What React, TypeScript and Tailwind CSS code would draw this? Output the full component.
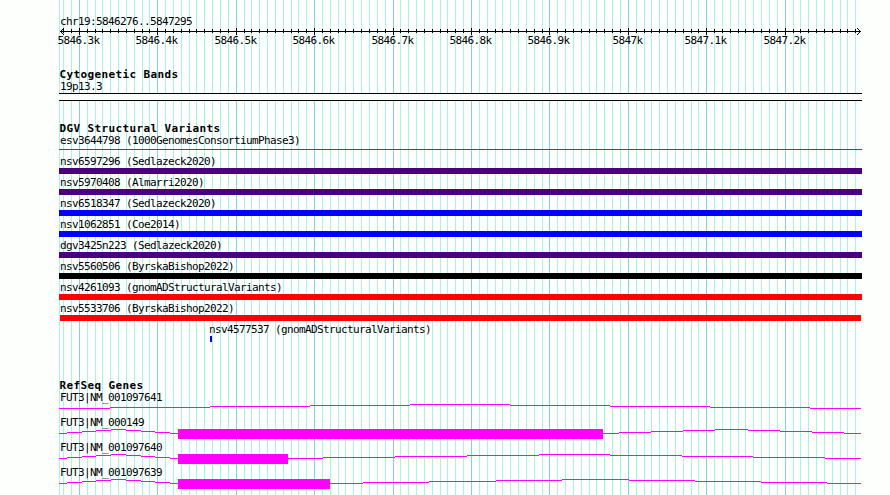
const REGION_START = 5846276;
const PX_PER_BASE = 800 / 1020;

const positionOf = (base: number) => Math.round(60 + (base - REGION_START) * PX_PER_BASE);

const minorTicks = Array.from({ length: 102 }, (_, i) => 5846280 + i * 10);
const isMajor = (base: number) => base % 100 === 0;

const axisLabels = [
  '5846.3k', '5846.4k', '5846.5k', '5846.6k', '5846.7k',
  '5846.8k', '5846.9k', '5847k', '5847.1k', '5847.2k',
];

type Variant = { name: string; color: string; box: string };

const variants: Variant[] = [
  { name: 'nsv6597296 (Sedlazeck2020)', color: 'bg-[#4b0082]', box: 'ml-[59px] w-[803px]' },
  { name: 'nsv5970408 (Almarri2020)', color: 'bg-[#4b0082]', box: 'ml-[59px] w-[803px]' },
  { name: 'nsv6518347 (Sedlazeck2020)', color: 'bg-[#0000ff]', box: 'ml-[59px] w-[803px]' },
  { name: 'nsv1062851 (Coe2014)', color: 'bg-[#0000ff]', box: 'ml-[59px] w-[803px]' },
  { name: 'dgv3425n223 (Sedlazeck2020)', color: 'bg-[#4b0082]', box: 'ml-[59px] w-[803px]' },
  { name: 'nsv5560506 (ByrskaBishop2022)', color: 'bg-black', box: 'ml-[59px] w-[803px]' },
  { name: 'nsv4261093 (gnomADStructuralVariants)', color: 'bg-[#ff0000]', box: 'ml-[59px] w-[803px]' },
  { name: 'nsv5533706 (ByrskaBishop2022)', color: 'bg-[#ff0000]', box: 'ml-[60px] w-[801px]' },
];

// Each intron is a stepped arch: ten x breaks, rising four pixels to the middle segment.
type Gene = { name: string; exon?: [number, number]; introns: number[][] };

const leadingIntron = [59, 67, 82, 96, 111, 126, 141, 155, 170, 178];

const genes: Gene[] = [
  { name: 'FUT3|NM_001097641', introns: [[59, 110, 210, 310, 410, 510, 610, 710, 810, 861]] },
  {
    name: 'FUT3|NM_000149',
    exon: [178, 603],
    introns: [leadingIntron, [603, 619, 651, 683, 715, 748, 780, 812, 844, 861]],
  },
  {
    name: 'FUT3|NM_001097640',
    exon: [178, 288],
    introns: [leadingIntron, [288, 323, 395, 467, 539, 610, 682, 753, 825, 861]],
  },
  {
    name: 'FUT3|NM_001097639',
    exon: [178, 330],
    introns: [leadingIntron, [330, 363, 429, 496, 562, 629, 695, 761, 827, 861]],
  },
];

function GridLines() {
  return (
    <svg className="absolute inset-0" width="890" height="495" shapeRendering="crispEdges">
      <rect x={59} y={0} width={1} height={495} fill="#afeeee" />
      {minorTicks.map((b) => (
        <rect key={b} x={positionOf(b)} y={0} width={1} height={495} fill={isMajor(b) ? '#87ceeb' : '#afeeee'} />
      ))}
    </svg>
  );
}

function Ruler() {
  return (
    <svg className="block" width="890" height="7" shapeRendering="crispEdges">
      <rect x={60} y={3} width={801} height={1} />
      {minorTicks.map((b) => (
        <rect key={b} x={positionOf(b)} y={isMajor(b) ? 0 : 1} width={1} height={isMajor(b) ? 7 : 4} />
      ))}
      {[1, 2, 3].map((d) => (
        <g key={d}>
          <rect x={60 + d} y={3 - d} width={1} height={1} />
          <rect x={60 + d} y={3 + d} width={1} height={1} />
          <rect x={860 - d} y={3 - d} width={1} height={1} />
          <rect x={860 - d} y={3 + d} width={1} height={1} />
        </g>
      ))}
    </svg>
  );
}

function Heading({ text }: { text: string }) {
  return <h2 className="ml-[59.5px] h-[14px] text-[11px] leading-[21px] font-bold tracking-[0.38px]">{text}</h2>;
}

function Label({ text, indent = 'ml-[60px]' }: { text: string; indent?: string }) {
  return <div className={`${indent} h-[15px] leading-[17px]`}>{text}</div>;
}

function GeneRow({ gene }: { gene: Gene }) {
  return (
    <div className="h-[25px]">
      <Label text={gene.name} />
      <svg className="block" width="890" height="10" fill="#ff00ff" shapeRendering="crispEdges">
        {gene.introns.map((xs) =>
          xs.slice(0, -1).map((x, i) => (
            <rect key={x} x={x} y={Math.abs(i - 4)} width={xs[i + 1] - x} height={1} />
          )),
        )}
        {gene.exon && <rect x={gene.exon[0]} y={0} width={gene.exon[1] - gene.exon[0]} height={10} />}
      </svg>
    </div>
  );
}

export default function App() {
  return (
    <div className="relative h-[495px] w-[890px] overflow-hidden bg-[#fdfffc] font-['DejaVu_Sans_Mono',monospace] text-[11px] tracking-[-0.62px] whitespace-pre text-black">
      <GridLines />
      <main className="relative flex flex-col pt-[13px]">
        <header>
          <Label text="chr19:5846276..5847295" />
          <Ruler />
          <div className="relative h-[29px] leading-[11px]">
            {axisLabels.map((label, i) => (
              <span
                key={label}
                className="absolute top-0"
                style={{ left: positionOf(5846300 + i * 100) - label.length * 3 - 0.4 }}
              >
                {label}
              </span>
            ))}
          </div>
        </header>

        <section className="mb-[17px]">
          <Heading text="Cytogenetic Bands" />
          <Label text="19p13.3" />
          <div className="ml-[59px] h-[8px] w-[803px] border-y border-black bg-[#fdfffc]" />
        </section>

        <section className="mb-[33px]">
          <Heading text="DGV Structural Variants" />
          <div className="h-[21px]">
            <Label text="esv3644798 (1000GenomesConsortiumPhase3)" />
            <div className="mt-[2px] ml-[59px] h-px w-[803px] bg-[#ff0000]" />
          </div>
          {variants.map((v) => (
            <div key={v.name}>
              <Label text={v.name} />
              <div className={`h-[6px] ${v.box} ${v.color}`} />
            </div>
          ))}
          <Label text="nsv4577537 (gnomADStructuralVariants)" indent="ml-[209px]" />
          <div className="ml-[210px] h-[6px] w-[2px] bg-[#0000ff]" />
        </section>

        <section>
          <Heading text="RefSeq Genes" />
          {genes.map((g) => (
            <GeneRow key={g.name} gene={g} />
          ))}
        </section>
      </main>
    </div>
  );
}
